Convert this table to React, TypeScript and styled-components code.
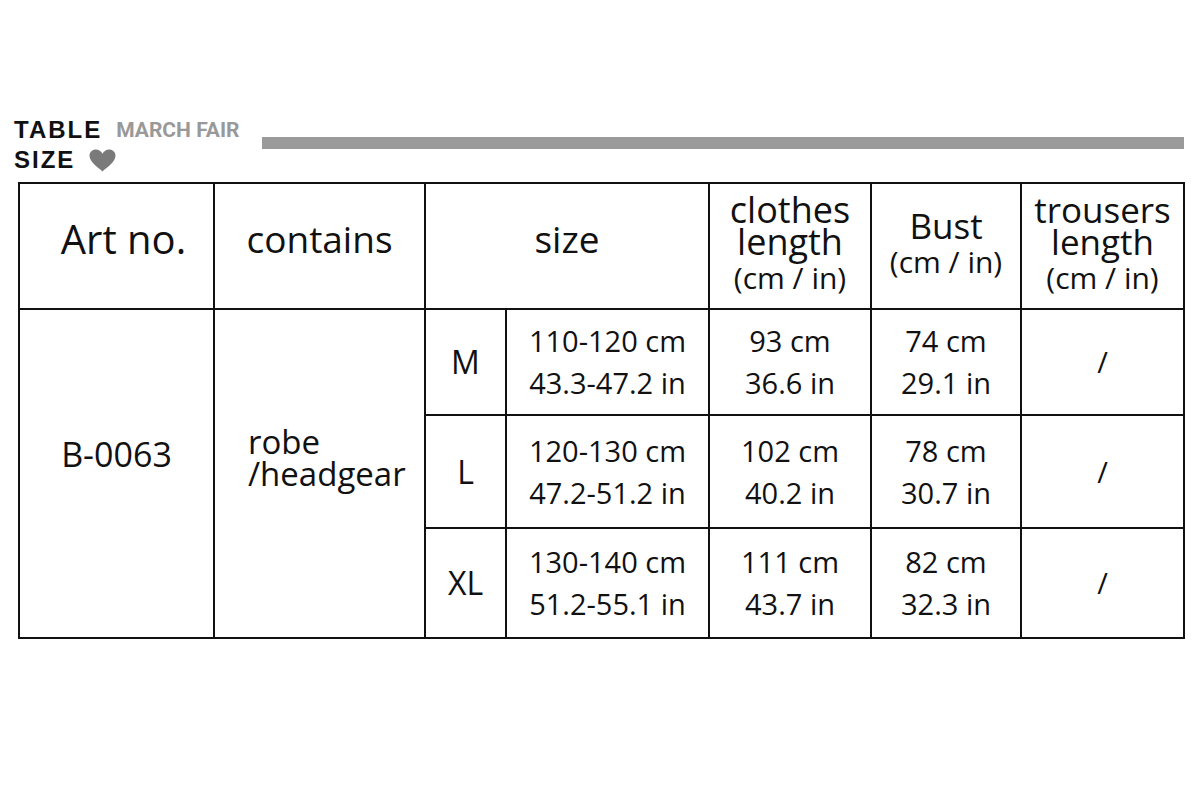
import styled, { createGlobalStyle } from "styled-components";

const GlobalStyle = createGlobalStyle`
  html, body {
    margin: 0;
    padding: 0;
    background: #fff;
  }
  body {
    font-family: "Open Sans", "Noto Sans", sans-serif;
    color: #111;
  }
`;

const Page = styled.div`
  width: 1200px;
  height: 800px;
  padding-top: 115px;
  box-sizing: border-box;
`;

const Header = styled.div`
  display: flex;
  align-items: flex-start;
  padding: 0 16px 0 14px;
`;

const TitleBlock = styled.div`
  width: 248px;
  flex-shrink: 0;
`;

const TitleLine = styled.div`
  display: flex;
  align-items: center;
  gap: 14px;
  height: 30px;
`;

const TitleWord = styled.span`
  font-family: "Liberation Sans", Arial, sans-serif;
  font-weight: 700;
  font-size: 24px;
  letter-spacing: 2px;
  color: #111;
`;

const SubWord = styled.span`
  font-family: Roboto, "Liberation Sans", sans-serif;
  font-weight: 700;
  font-size: 21px;
  color: #999;
  letter-spacing: 0;
`;

const Bar = styled.div`
  flex: 1;
  height: 12px;
  margin-top: 22px;
  background: #9a9a9a;
`;

const Table = styled.table`
  margin: 7px 17px 0 18px;
  border-collapse: collapse;
  table-layout: fixed;
  width: 1165px;

  td, th {
    border: 2px solid #111;
    text-align: center;
    vertical-align: middle;
    padding: 0;
    font-weight: 400;
  }
`;

const HeadRow = styled.tr`
  height: 126px;
`;

const HeadCell = styled.th<{ $size?: number; $raise?: boolean; $shift?: number }>`
  font-size: ${(p) => p.$size ?? 36}px;
  line-height: 32px;
  && {
    padding-bottom: ${(p) => (p.$raise ? 14 : 0)}px;
    padding-left: ${(p) => p.$shift ?? 0}px;
  }
`;

const Unit = styled.div`
  font-size: 30px;
  line-height: 40px;
`;

const BodyRow = styled.tr<{ $h: number }>`
  height: ${(p) => p.$h}px;
`;

const Cell = styled.td<{ $size?: number }>`
  font-size: ${(p) => p.$size ?? 29}px;
  line-height: 42px;
`;

const ArtCell = styled.td`
  font-size: 34px;
  && {
    padding-bottom: 40px;
  }
`;

const ContainsCell = styled.td`
  font-size: 33px;
  line-height: 32px;
  && {
    text-align: left;
    padding: 0 0 32px 33px;
  }
`;

function Heart() {
  return (
    <svg width="27" height="23" viewBox="0 0 26 22">
      <path
        d="M13 21.5 C 9 18, 0.5 12.5, 0.5 6.5 C 0.5 2.8, 3.3 0.5, 6.6 0.5 C 9.4 0.5, 11.8 2.3, 13 4.6 C 14.2 2.3, 16.6 0.5, 19.4 0.5 C 22.7 0.5, 25.5 2.8, 25.5 6.5 C 25.5 12.5, 17 18, 13 21.5 Z"
        fill="#7a7a7a"
      />
    </svg>
  );
}

const rows = [
  { size: "M", range: ["110-120 cm", "43.3-47.2 in"], clothes: ["93 cm", "36.6 in"], bust: ["74 cm", "29.1 in"], h: 106 },
  { size: "L", range: ["120-130 cm", "47.2-51.2 in"], clothes: ["102 cm", "40.2 in"], bust: ["78 cm", "30.7 in"], h: 113 },
  { size: "XL", range: ["130-140 cm", "51.2-55.1 in"], clothes: ["111 cm", "43.7 in"], bust: ["82 cm", "32.3 in"], h: 110 },
];

export default function App() {
  return (
    <>
      <GlobalStyle />
      <Page>
        <Header>
          <TitleBlock>
            <TitleLine>
              <TitleWord>TABLE</TitleWord>
              <SubWord>MARCH FAIR</SubWord>
            </TitleLine>
            <TitleLine>
              <TitleWord>SIZE</TitleWord>
              <Heart />
            </TitleLine>
          </TitleBlock>
          <Bar />
        </Header>
        <Table>
          <colgroup>
            <col style={{ width: 195 }} />
            <col style={{ width: 211 }} />
            <col style={{ width: 81 }} />
            <col style={{ width: 203 }} />
            <col style={{ width: 162 }} />
            <col style={{ width: 150 }} />
            <col style={{ width: 163 }} />
          </colgroup>
          <thead>
            <HeadRow>
              <HeadCell $size={40} $raise $shift={14}>
                Art no.
              </HeadCell>
              <HeadCell $size={37} $raise>
                contains
              </HeadCell>
              <HeadCell $size={37} $raise colSpan={2}>
                size
              </HeadCell>
              <HeadCell>
                clothes
                <br />
                length
                <Unit>(cm / in)</Unit>
              </HeadCell>
              <HeadCell $size={35}>
                Bust
                <Unit>(cm / in)</Unit>
              </HeadCell>
              <HeadCell $size={35}>
                trousers
                <br />
                length
                <Unit>(cm / in)</Unit>
              </HeadCell>
            </HeadRow>
          </thead>
          <tbody>
            {rows.map((r, i) => (
              <BodyRow key={r.size} $h={r.h}>
                {i === 0 && (
                  <>
                    <ArtCell rowSpan={3}>B-0063</ArtCell>
                    <ContainsCell rowSpan={3}>
                      robe
                      <br />
                      /headgear
                    </ContainsCell>
                  </>
                )}
                <Cell $size={32}>{r.size}</Cell>
                <Cell>
                  {r.range[0]}
                  <br />
                  {r.range[1]}
                </Cell>
                <Cell>
                  {r.clothes[0]}
                  <br />
                  {r.clothes[1]}
                </Cell>
                <Cell>
                  {r.bust[0]}
                  <br />
                  {r.bust[1]}
                </Cell>
                <Cell>/</Cell>
              </BodyRow>
            ))}
          </tbody>
        </Table>
      </Page>
    </>
  );
}
